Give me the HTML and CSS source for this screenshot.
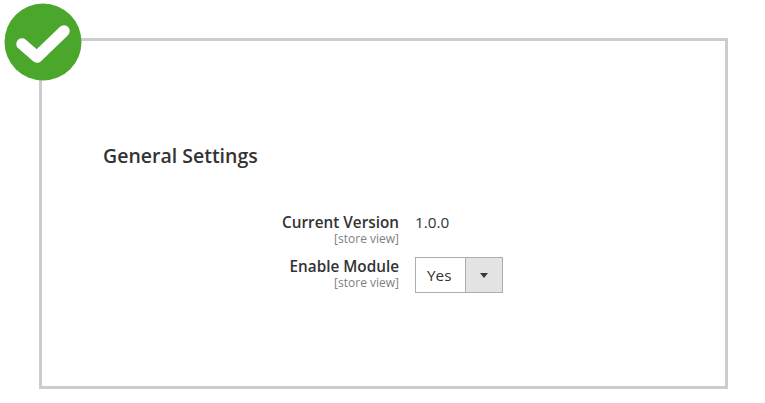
FILE: index.html
```html
<!DOCTYPE html>
<html lang="en">
<head>
    <meta charset="UTF-8">
    <title>General Settings</title>
    <link rel="stylesheet" href="styles.css">
</head>
<body>
    <div class="panel">
        <svg class="badge" width="78" height="78" viewBox="0 0 78 78">
            <circle cx="39" cy="39" r="38.5" fill="#4aa72c"/>
            <path d="M18 41 L33 54 L60 28" fill="none" stroke="#fff" stroke-width="11.5" stroke-linecap="round" stroke-linejoin="round"/>
        </svg>
        <h2 class="title">General Settings</h2>
        <div class="fields">
            <div class="label">
                <span class="name">Current Version</span>
                <span class="scope">[store view]</span>
            </div>
            <div class="value">1.0.0</div>
            <div class="label">
                <span class="name">Enable Module</span>
                <span class="scope">[store view]</span>
            </div>
            <div class="select">
                <span class="select-text">Yes</span>
                <span class="select-btn"><span class="arrow"></span></span>
            </div>
        </div>
    </div>
</body>
</html>
```

FILE: styles.css
```css
body {
    margin: 0;
    padding: 38px 37px 14px 39px;
    height: 403px;
    box-sizing: border-box;
    background-color: #fff;
    font-family: "Open Sans", sans-serif;
    color: #333;
}

.panel {
    position: relative;
    height: 100%;
    box-sizing: border-box;
    border: 3px solid #ccc;
    padding: 102px 0 0 61px;
}

.badge {
    position: absolute;
    left: -38px;
    top: -38px;
}

.title {
    margin: 0;
    font-size: 19.5px;
    line-height: 25px;
    font-weight: 600;
}

.fields {
    display: grid;
    grid-template-columns: 296px auto;
    justify-content: start;
    column-gap: 16px;
    row-gap: 11px;
    margin-top: 44px;
}

.label {
    display: flex;
    flex-direction: column;
    align-items: flex-end;
}

.name {
    font-size: 15.3px;
    line-height: 20px;
    font-weight: 600;
}

.scope {
    font-size: 12px;
    line-height: 13px;
    color: #808080;
}

.value {
    font-size: 15.3px;
    line-height: 20px;
}

.select {
    display: flex;
    width: 88px;
    height: 36px;
    margin-top: 1px;
    box-sizing: border-box;
    border: 1px solid #adadad;
    font-size: 15.3px;
}

.select-text {
    flex: 1;
    display: flex;
    align-items: center;
    padding-left: 11px;
}

.select-btn {
    width: 36px;
    display: flex;
    align-items: center;
    justify-content: center;
    background-color: #e3e3e3;
    border-left: 1px solid #adadad;
}

.arrow {
    width: 0;
    height: 0;
    border-left: 4.5px solid transparent;
    border-right: 4.5px solid transparent;
    border-top: 5px solid #41362f;
}
```
